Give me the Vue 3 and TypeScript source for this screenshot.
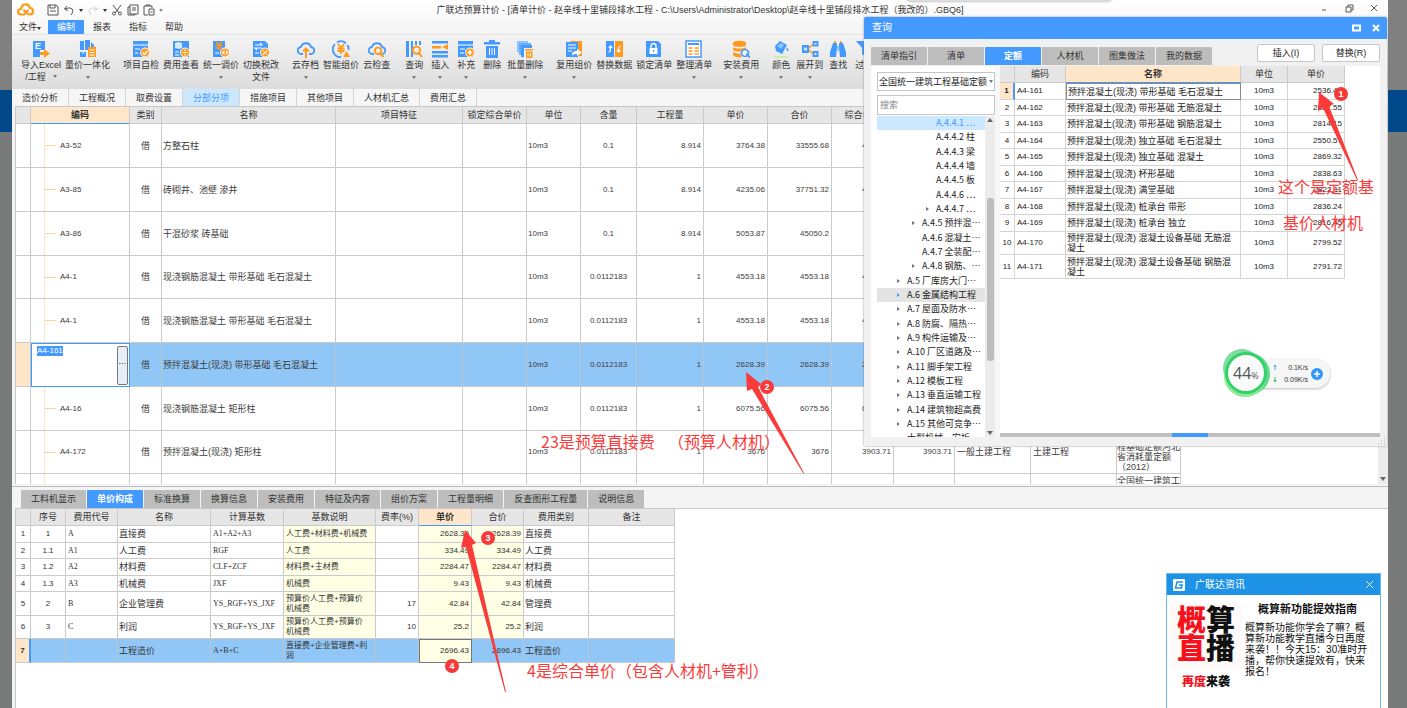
<script setup lang="ts">
import { ref } from 'vue'

interface Shape { d?: string; f?: string; s?: string; w?: number; t?: string; x?: number; y?: number; z?: number }
interface Tool { label: string; second?: string; caret?: boolean; icon: Shape[] }
interface Column { title: string; width: number; align: 'l' | 'c' | 'r'; hot?: boolean; kind?: string }

const B = '#4499ff'
const L = '#8fc4ff'
const O = '#ff9a1f'
const W = '#ffffff'
const doc = 'M1 1h12l3 3v13H1z'
const disc = 'M13 8a4.5 4.5 0 1 0 .01 0z'
const cloud = 'M6 14H4.5a3.5 3.5 0 0 1-.5-7A5.2 5.2 0 0 1 14 7a3.5 3.5 0 0 1-.5 7H12'

const toolGroups: Tool[][] = [
  [
    { label: '导入Excel', second: '/工程', caret: true, icon: [{ d: 'M1 1h12v16H1z', f: B }, { t: 'E', x: 3, y: 9, z: 9, f: W }, { d: 'M8 10h10v7H8z', f: '#efefef' }, { d: 'M8 12h4V9l6 4.5-6 4.5v-3H8z', f: O }] },
    { label: '量价一体化', caret: true, icon: [{ d: 'M1 1h4v9H1zM6 0h5v10H6zM1 12h6v5H1zM12 2l3 3v3h-3z', f: B }, { d: 'M3 13h2', s: W, w: 1 }, { d: 'M9 7h8v10H9z', f: O }, { d: 'M10.5 10h5M10.5 12.5h5M10.5 15h5', s: W, w: 1 }] },
  ],
  [
    { label: '项目自检', icon: [{ d: 'M1 1h15v16H1z', f: B }, { d: 'M1 5h15M3 9h5M3 13h3', s: W, w: 1 }, { d: disc, f: O, s: W, w: 1 }, { d: 'M10.5 12.5l2 2 3-3.5', s: W, w: 1.5 }] },
    { label: '费用查看', icon: [{ d: 'M1 1h16v16H1z', f: B }, { d: 'M3 3l3-1 4 1v5l-3 1-4-1z', f: '#d7eaff' }, { d: 'M3 12h4M3 15h4', s: W, w: 1 }, { d: disc, f: O, s: W, w: 1 }, { d: 'M10.5 12.5h5M13 9.5v1.5M13 14v1.5', s: W, w: 1.2 }] },
    { label: '统一调价', caret: true, icon: [{ d: 'M1 1h12v16H1z', f: B }, { d: 'M4 2l3 3 3-3M3.5 5.5h7M3.5 8h7M7 5v5', s: O, w: 1.4 }, { d: 'M3 13h4', s: W, w: 1 }, { d: disc, f: O, s: W, w: 1 }, { d: 'M12.5 10v5l-2.5-2.5zM14 10v5l2.5-2.5z', f: W }] },
    { label: '切换税改', second: '文件', icon: [{ d: doc, f: B }, { d: 'M3 5h7l-2-2M10 8H3l2 2M3 13h4', s: W, w: 1.2 }, { d: disc, f: O, s: W, w: 1 }, { d: 'M15 10.5l-4 4M11.2 10.5v1M14.8 13.5v1', s: W, w: 1.3 }] },
  ],
  [
    { label: '云存档', caret: true, icon: [{ d: cloud, s: B, w: 1.8 }, { d: 'M9 7l4 4.5h-3V18H8v-6.5H5z', f: O }] },
    { label: '智能组价', icon: [{ d: 'M9 17A7.7 7.7 0 0 1 3 4M5 2.5A7.7 7.7 0 0 1 14 3.2M15.5 5a7.7 7.7 0 0 1 1 5', s: B, w: 1.8 }, { d: 'M6 4l3 4 3-4M5.5 8.5h7M5.5 11h7M9 8v6', s: O, w: 1.8 }, { d: 'M14.5 11l3.5 6h-7z', f: O }] },
    { label: '云检查', icon: [{ d: cloud, s: B, w: 1.8 }, { d: 'M10 7.5a3.3 3.3 0 1 0 .01 0zM12.5 13.5l3 3.5', s: O, w: 2 }] },
  ],
  [
    { label: '查询', caret: true, icon: [{ d: 'M1 1h3v16H1zM6 1h2v16H6zM10 1h2v4h-2zM14 1h2v4h-2z', f: B }, { d: 'M11.5 6.5a3.6 3.6 0 1 0 .01 0zM14 13l3 4', s: O, w: 2 }] },
    { label: '插入', caret: true, icon: [{ d: 'M1 1h16v2.5H1zM1 11h16v2.5H1zM1 15h16v2.5H1z', f: B }, { d: 'M1 6h9v2.5H1zM17 4v6l-6-3z', f: O }] },
    { label: '补充', caret: true, icon: [{ d: 'M1 1h15v16H1z', f: B }, { d: 'M1 5h15M3 9h5M3 13h4', s: W, w: 1 }, { d: disc, f: O, s: W, w: 1 }, { d: 'M10.5 12.5h5M13 10v5', s: W, w: 1.5 }] },
    { label: '删除', icon: [{ d: 'M1 2h5V0h6v2h5v2.5H1zM3 6h12v12H3z', f: B }, { d: 'M6.5 8v7M9 8v7M11.5 8v7', s: W, w: 1 }] },
    { label: '批量删除', caret: true, icon: [{ d: 'M1 1h11v11H1z', f: L }, { d: 'M3 3h12v12H3z', f: '#68aefc' }, { d: 'M5 5h11v12H5z', f: B }, { d: 'M8 8h10v10H8z', f: '#efefef' }, { d: 'M9 9h8v1.5H9zM10 11.5h6.5V18H10z', f: O }, { d: 'M12 13v3.5M14.5 13v3.5', s: W, w: 1 }] },
  ],
  [
    { label: '复用组价', caret: true, icon: [{ d: 'M5 1h12v15H5z', f: O }, { d: 'M1 2h12v15H1z', f: B }, { d: 'M3 5h8M3 8h8M3 11h4', s: W, w: 1.2 }, { d: 'M7 16c0-4 2-5 5-5V9l5 3.5-5 3.5v-2c-2 0-4 0-5 2z', f: W }] },
    { label: '替换数据', icon: [{ d: 'M1 1h8v16H1z', f: B }, { d: 'M10 1h8v16h-8z', f: O }, { d: 'M3.5 12c1.5 0 2-1 2-5M3.8 8l1.7-2 1.7 2M15.5 6c-1.5 0-2 1-2 5M11.8 10l1.7 2 1.7-2', s: W, w: 1.2 }] },
    { label: '锁定清单', icon: [{ d: doc, f: B }, { d: 'M4.5 8h8v6h-8z', f: W }, { d: 'M6 8V6a2.5 2.5 0 0 1 5 0v2', s: W, w: 1.3 }, { d: 'M8.5 10v2', s: B, w: 1.2 }] },
    { label: '整理清单', caret: true, icon: [{ d: 'M1 1h15v16H1z', f: W, s: B, w: 1.5 }, { d: 'M3 4h11', s: B, w: 2 }, { d: 'M3.5 8h4M9.5 8H14M3.5 11h4M9.5 11H14M3.5 14h4M9.5 14H14', s: O, w: 1.6 }] },
  ],
  [
    { label: '安装费用', caret: true, icon: [{ d: 'M1 3c0-3 13-3 13 0v2c0 2.5-13 2.5-13 0z', f: O }, { d: 'M1 7c3 2 10 2 13 0v3c-3 2-10 2-13 0zM1 12c3 2 8 2 10 1v4c-4 1-9 0-10-2z', f: O }, { d: 'M13 9a4.5 4.5 0 1 0 .01 0z', f: W }, { d: 'M13 9.5a3.5 3.5 0 1 0 .01 0M14 13.5l4 4', s: B, w: 1.6 }] },
  ],
  [
    { label: '颜色', caret: true, icon: [{ d: 'M3 6l5-5 7 4-5 9-6-3z', f: B }, { d: 'M5 6l4-3 3 2-3 4z', f: L }, { d: 'M15 8l1 3', s: B, w: 1.4 }, { d: 'M2 16h14v2H2z', f: '#c9f0b4' }] },
    { label: '展开到', caret: true, icon: [{ d: 'M1 5h7v8H1z', f: B }, { d: 'M3 7.5h3v3H3z', f: '#cfe5ff' }, { d: 'M12.5 2h4v3.5h-4zM12.5 12h4v4h-4z', s: B, w: 2 }, { d: 'M8 8l3.5-3.5M8 10l3.5 3.5', s: O, w: 1.4 }] },
    { label: '查找', icon: [{ d: 'M4 3h4v4l-1 10H1V12zM10 3h4l3 9v5h-6l-1-10z', f: B }, { d: 'M5 1h2v2H5zM11 1h2v2h-2z', f: O }, { d: 'M8 6h2v5H8z', f: L }] },
    { label: '过滤', icon: [{ d: 'M1 1h16l-6 7v9l-4-3V8z', f: B }] },
  ],
]

const menus = ['文件', '编制', '报表', '指标', '帮助']
const navTabs = ['造价分析', '工程概况', '取费设置', '分部分项', '措施项目', '其他项目', '人材机汇总', '费用汇总']
const detailTabs = ['工料机显示', '单价构成', '标准换算', '换算信息', '安装费用', '特征及内容', '组价方案', '工程量明细', '反查图形工程量', '说明信息']
const dialogTabs = ['清单指引', '清单', '定额', '人材机', '图集做法', '我的数据']

const mainCols: Column[] = [
  { title: '', width: 15, align: 'c' },
  { title: '编码', width: 99, align: 'l', hot: true, kind: 'code' },
  { title: '类别', width: 32, align: 'c' },
  { title: '名称', width: 174, align: 'l', kind: 'tight' },
  { title: '项目特征', width: 127, align: 'l' },
  { title: '锁定综合单价', width: 64, align: 'c' },
  { title: '单位', width: 54, align: 'l', kind: 'num tight' },
  { title: '含量', width: 56, align: 'c', kind: 'num' },
  { title: '工程量', width: 67, align: 'r', kind: 'num' },
  { title: '单价', width: 64, align: 'r', kind: 'num' },
  { title: '合价', width: 64, align: 'r', kind: 'num' },
  { title: '综合单价', width: 62, align: 'r', kind: 'num' },
  { title: '综合合价', width: 61, align: 'r', kind: 'num' },
  { title: '取费专业', width: 76, align: 'l' },
  { title: '施工组织', width: 86, align: 'l' },
  { title: '所属定额库', width: 64, align: 'l' },
]
const lib = '全国统一建筑工\n程基础定额河北\n省消耗量定额\n（2012）'
function mainRow(code: string, name: string, qty: string, work: string, price: string, total: string, comp: string): string[] {
  return ['', code, '借', name, '', '', '10m3', qty, work, price, total, comp, comp, '一般土建工程', '土建工程', lib]
}
const mainRows: string[][] = [
  mainRow('A3-52', '方整石柱', '0.1', '8.914', '3764.38', '33555.68', '4764.38'),
  mainRow('A3-85', '砖砌井、池壁 渗井', '0.1', '8.914', '4235.06', '37751.32', '4235.06'),
  mainRow('A3-86', '干混砂浆 砖基础', '0.1', '8.914', '5053.87', '45050.2', ''),
  mainRow('A4-1', '现浇钢筋混凝土 带形基础 毛石混凝土', '0.0112183', '1', '4553.18', '4553.18', '4553.18'),
  mainRow('A4-1', '现浇钢筋混凝土 带形基础 毛石混凝土', '0.0112183', '1', '4553.18', '4553.18', '4553.18'),
  mainRow('A4-161', '预拌混凝土(现浇) 带形基础 毛石混凝土', '0.0112183', '1', '2628.39', '2628.39', '2696.43'),
  mainRow('A4-16', '现浇钢筋混凝土 矩形柱', '0.0112183', '1', '6075.56', '6075.56', '6075.56'),
  mainRow('A4-172', '预拌混凝土(现浇) 矩形柱', '0.0112183', '1', '3676', '3676', '3903.71'),
  ['', '', '', '', '', '', '', '', '', '', '', '', '', '', '', lib],
]
const selectedMain = 5

const costCols: Column[] = [
  { title: '', width: 15, align: 'c', kind: 'num' },
  { title: '序号', width: 35, align: 'c', kind: 'num' },
  { title: '费用代号', width: 52, align: 'l', kind: 'formula' },
  { title: '名称', width: 93, align: 'l', kind: 'tight' },
  { title: '计算基数', width: 73, align: 'l', kind: 'formula' },
  { title: '基数说明', width: 92, align: 'l', kind: 'note tint' },
  { title: '费率(%)', width: 43, align: 'r', kind: 'num' },
  { title: '单价', width: 53, align: 'r', hot: true, kind: 'num tint price' },
  { title: '合价', width: 52, align: 'r', kind: 'num tint' },
  { title: '费用类别', width: 65, align: 'l', kind: 'tight' },
  { title: '备注', width: 86, align: 'l' },
]
const costRows: string[][] = [
  ['1', '1', 'A', '直接费', 'A1+A2+A3', '人工费+材料费+机械费', '', '2628.39', '2628.39', '直接费', ''],
  ['2', '1.1', 'A1', '人工费', 'RGF', '人工费', '', '334.49', '334.49', '人工费', ''],
  ['3', '1.2', 'A2', '材料费', 'CLF+ZCF', '材料费+主材费', '', '2284.47', '2284.47', '材料费', ''],
  ['4', '1.3', 'A3', '机械费', 'JXF', '机械费', '', '9.43', '9.43', '机械费', ''],
  ['5', '2', 'B', '企业管理费', 'YS_RGF+YS_JXF', '预算价人工费+预算价\n机械费', '17', '42.84', '42.84', '管理费', ''],
  ['6', '3', 'C', '利润', 'YS_RGF+YS_JXF', '预算价人工费+预算价\n机械费', '10', '25.2', '25.2', '利润', ''],
  ['7', '', '', '工程造价', 'A+B+C', '直接费+企业管理费+利\n润', '', '2696.43', '2696.43', '工程造价', ''],
]

const quotaCols: Column[] = [
  { title: '', width: 15, align: 'c', kind: 'num' },
  { title: '编码', width: 51, align: 'l', kind: 'num' },
  { title: '名称', width: 175, align: 'l', hot: true, kind: 'name' },
  { title: '单位', width: 47, align: 'c', kind: 'num' },
  { title: '单价', width: 57, align: 'r', kind: 'num' },
]
const pre = '预拌混凝土(现浇) '
const quotaRows: string[][] = [
  ['1', 'A4-161', pre + '带形基础 毛石混凝土', '10m3', '2536.47'],
  ['2', 'A4-162', pre + '带形基础 无筋混凝土', '10m3', '2827.55'],
  ['3', 'A4-163', pre + '带形基础 钢筋混凝土', '10m3', '2814.15'],
  ['4', 'A4-164', pre + '独立基础 毛石混凝土', '10m3', '2550.57'],
  ['5', 'A4-165', pre + '独立基础 混凝土', '10m3', '2869.32'],
  ['6', 'A4-166', pre + '杯形基础', '10m3', '2838.63'],
  ['7', 'A4-167', pre + '满堂基础', '10m3', '2822.11'],
  ['8', 'A4-168', pre + '桩承台 带形', '10m3', '2836.24'],
  ['9', 'A4-169', pre + '桩承台 独立', '10m3', '2816.45'],
  ['10', 'A4-170', pre + '混凝土设备基础 无筋混\n凝土', '10m3', '2799.52'],
  ['11', 'A4-171', pre + '混凝土设备基础 钢筋混\n凝土', '10m3', '2791.72'],
]

interface Node { text: string; level: number; arrow: boolean }
const tree: Node[] = [
  { text: 'A.4.4.1 ⋯', level: 3, arrow: false },
  { text: 'A.4.4.2 柱', level: 3, arrow: false },
  { text: 'A.4.4.3 梁', level: 3, arrow: false },
  { text: 'A.4.4.4 墙', level: 3, arrow: false },
  { text: 'A.4.4.5 板', level: 3, arrow: false },
  { text: 'A.4.4.6 ⋯', level: 3, arrow: false },
  { text: 'A.4.4.7 ⋯', level: 3, arrow: true },
  { text: 'A.4.5 预拌混⋯', level: 2, arrow: true },
  { text: 'A.4.6 混凝土⋯', level: 2, arrow: false },
  { text: 'A.4.7 全装配⋯', level: 2, arrow: false },
  { text: 'A.4.8 钢筋、⋯', level: 2, arrow: true },
  { text: 'A.5 厂库房大门⋯', level: 1, arrow: true },
  { text: 'A.6 金属结构工程', level: 1, arrow: true },
  { text: 'A.7 屋面及防水⋯', level: 1, arrow: true },
  { text: 'A.8 防腐、隔热⋯', level: 1, arrow: true },
  { text: 'A.9 构件运输及⋯', level: 1, arrow: true },
  { text: 'A.10 厂区道路及⋯', level: 1, arrow: true },
  { text: 'A.11 脚手架工程', level: 1, arrow: true },
  { text: 'A.12 模板工程', level: 1, arrow: true },
  { text: 'A.13 垂直运输工程', level: 1, arrow: true },
  { text: 'A.14 建筑物超高费', level: 1, arrow: true },
  { text: 'A.15 其他可竞争⋯', level: 1, arrow: true },
  { text: '大型机械、安拆⋯', level: 1, arrow: false },
]

const menu = ref('编制')
const nav = ref('分部分项')
const detail = ref('单价构成')
const dialogTab = ref('定额')
const code = ref('A4-161')
const keyword = ref('')
</script>

<template>
  <div class="desktop">
    <main class="window">
      <header class="top">
        <div class="titlebar">
          <svg class="logo" viewBox="0 0 18 14" aria-hidden="true">
            <path d="M7 11.5H4.5C0 11.5 0 6 4 6 5 0 12 0 13 5c4 0 4 6.500 0 6.500-3 0-4-3-6-4" fill="none" stroke="#ff9a1f" stroke-width="2.2" stroke-linecap="round" />
            <path d="M7 11.5l4-4" fill="none" stroke="#ff9a1f" stroke-width="2" stroke-linecap="round" />
          </svg>
          <div class="quick">
            <button aria-label="保存"><svg viewBox="0 0 12 12"><path d="M1 1h8l2 2v8H1zM3 1v3h5V1M3 7h6" /></svg></button>
            <button aria-label="撤销"><svg viewBox="0 0 12 12"><path d="M4 2L1.5 5 5 6.5M2 5c7-3 10 1 6 6" /></svg></button>
            <i class="caret dark"></i>
            <button aria-label="恢复" class="faint"><svg viewBox="0 0 12 12"><path d="M8 2l2.5 3L7 6.5M10 5C3 2 0 6 4 11" /></svg></button>
            <i class="caret dark"></i>
            <button aria-label="剪切"><svg viewBox="0 0 12 12"><path d="M2 1l6 8M10 1L4 9M1.5 9.5a1.5 1.5 0 1 0 3 0 1.5 1.5 0 1 0-3 0M7.5 9.5a1.5 1.5 0 1 0 3 0 1.5 1.5 0 1 0-3 0" /></svg></button>
            <button aria-label="复制"><svg viewBox="0 0 12 12"><path d="M3 1h8v9H3zM3 3H1v8h7v-1M5 4h4M5 6h4" /></svg></button>
            <button aria-label="粘贴"><svg viewBox="0 0 12 12"><path d="M5 11H1V2h8v2M3 2V1h4v1M6 5h5v6H6zM7.5 8h2" /></svg></button>
            <i class="caret more"></i>
          </div>
          <h1>广联达预算计价 - [清单计价 - 赵辛线十里铺段排水工程 - C:\Users\Administrator\Desktop\赵辛线十里铺段排水工程（我改的）.GBQ6]</h1>
          <div class="controls">
            <button aria-label="最小化"><svg viewBox="0 0 10 10"><path d="M3 7h4" /></svg></button>
            <button aria-label="还原"><svg viewBox="0 0 10 10"><path d="M2 4h5v5H2zM4 4V2h5v5H7" /></svg></button>
            <button aria-label="关闭"><svg viewBox="0 0 10 10"><path d="M2 2l6 6M8 2L2 8" /></svg></button>
          </div>
        </div>
        <nav class="menubar">
          <button v-for="m in menus" :key="m" :class="{ on: m === menu }" @click="menu = m">
            {{ m }}<i v-if="m === '文件'" class="caret dark"></i>
          </button>
        </nav>
        <div class="ribbon">
          <div v-for="(group, g) in toolGroups" :key="g" class="group">
            <button v-for="tool in group" :key="tool.label">
              <svg viewBox="0 0 18 18" aria-hidden="true">
                <template v-for="(p, i) in tool.icon" :key="i">
                  <text v-if="p.t" :x="p.x" :y="p.y" :font-size="p.z" :fill="p.f" font-weight="bold">{{ p.t }}</text>
                  <path v-else :d="p.d" :fill="p.f || 'none'" :stroke="p.s || 'none'" :stroke-width="p.w || 0" />
                </template>
              </svg>
              <span>{{ tool.label }}</span>
              <span class="second">{{ tool.second }}<i v-if="tool.caret" class="caret" :class="{ after: tool.second }"></i></span>
            </button>
          </div>
        </div>
      </header>

      <nav class="navtabs">
        <button v-for="t in navTabs" :key="t" :class="{ on: t === nav }" @click="nav = t">{{ t }}</button>
      </nav>

      <section class="mainpane">
        <div class="gridwrap">
          <table class="grid main">
            <colgroup><col v-for="(c, i) in mainCols" :key="i" :style="{ width: c.width + 'px' }" /></colgroup>
            <thead>
              <tr><th v-for="(c, i) in mainCols" :key="i" :class="{ hot: c.hot }">{{ c.title }}</th></tr>
            </thead>
            <tbody>
              <tr v-for="(row, r) in mainRows" :key="r" :class="{ sel: r === selectedMain, blank: !row[1] }">
                <td v-for="(cell, i) in row" :key="i" :class="[mainCols[i].align, mainCols[i].kind]">
                  <div v-if="r === selectedMain && i === 1" class="editor">
                    <input v-model="code" aria-label="编码" />
                    <button aria-label="选择定额">⋯</button>
                  </div>
                  <template v-else>{{ cell }}</template>
                </td>
              </tr>
            </tbody>
          </table>
        </div>
        <div class="vbar"><i class="down"></i></div>
      </section>

      <section class="detailpane">
        <nav class="graytabs">
          <button v-for="t in detailTabs" :key="t" :class="{ on: t === detail }" @click="detail = t">{{ t }}</button>
        </nav>
        <div class="costwrap">
          <table class="grid cost">
            <colgroup><col v-for="(c, i) in costCols" :key="i" :style="{ width: c.width + 'px' }" /></colgroup>
            <thead>
              <tr><th v-for="(c, i) in costCols" :key="i" :class="{ hot: c.hot }">{{ c.title }}</th></tr>
            </thead>
            <tbody>
              <tr v-for="(row, r) in costRows" :key="r" :class="{ sel: r === 6, tall: r > 3 }">
                <td v-for="(cell, i) in row" :key="i" :class="[costCols[i].align, costCols[i].kind]">{{ cell }}</td>
              </tr>
            </tbody>
          </table>
        </div>
      </section>
    </main>

    <div class="drawer"></div>

    <section class="dialog" role="dialog" aria-label="查询">
      <header>
        <h2>查询</h2>
        <button aria-label="最大化"><svg viewBox="0 0 10 10"><path d="M1 2.5h7v5H1z" /></svg></button>
        <button aria-label="关闭"><svg viewBox="0 0 10 10"><path d="M2 2l6 6M8 2L2 8" /></svg></button>
      </header>
      <div class="dialogbar">
        <nav class="graytabs">
          <button v-for="t in dialogTabs" :key="t" :class="{ on: t === dialogTab }" @click="dialogTab = t">{{ t }}</button>
        </nav>
        <div class="actions"><button>插入(I)</button><button>替换(R)</button></div>
      </div>
      <div class="panes">
        <aside>
          <div class="picker">
            <select aria-label="定额库"><option>全国统一建筑工程基础定额</option></select>
            <i class="caret"></i>
          </div>
          <input v-model="keyword" type="search" placeholder="搜索" aria-label="搜索" />
          <div class="treebox">
            <ul>
              <li v-for="(n, i) in tree" :key="i" :class="['lv' + n.level, { current: i === 0, hover: i === 12 }]">
                <i :class="{ tri: n.arrow }"></i><span>{{ n.text }}</span>
              </li>
            </ul>
            <div class="treebar"><i class="up"></i><b></b><i class="down"></i></div>
          </div>
        </aside>
        <div class="quota">
          <table class="grid">
            <colgroup><col v-for="(c, i) in quotaCols" :key="i" :style="{ width: c.width + 'px' }" /></colgroup>
            <thead>
              <tr><th v-for="(c, i) in quotaCols" :key="i" :class="{ hot: c.hot }">{{ c.title }}</th></tr>
            </thead>
            <tbody>
              <tr v-for="(row, r) in quotaRows" :key="r" :class="{ first: r === 0, tall: r > 8 }">
                <td v-for="(cell, i) in row" :key="i" :class="[quotaCols[i].align, quotaCols[i].kind]">{{ cell }}</td>
              </tr>
            </tbody>
          </table>
          <div class="splitter"><i></i></div>
        </div>
      </div>
      <svg class="grip" viewBox="0 0 8 8" aria-hidden="true"><path d="M6 1h1M6 4h1M3 4h1M6 7h1M3 7h1M0 7h1" stroke="#aaa" /></svg>
    </section>

    <div class="meter">
      <svg viewBox="0 0 50 50" aria-hidden="true">
        <circle cx="21" cy="20" r="19" fill="#7fdc9f" />
        <circle cx="28" cy="26" r="21" fill="#5fd98a" />
        <circle cx="24" cy="28" r="21" fill="#8beb97" />
        <circle cx="25" cy="25" r="21" fill="#33d169" />
        <circle cx="25" cy="25" r="18" fill="#fbfbfb" />
      </svg>
      <p class="percent">44<small>%</small></p>
      <div class="speeds">
        <p><b class="upload">↑</b><span>0.1K/s</span></p>
        <p><b class="download">↓</b><span>0.09K/s</span></p>
      </div>
      <button aria-label="加速"><svg viewBox="0 0 12 12"><circle cx="6" cy="6" r="6" fill="#3296fa" /><path d="M3 6h6M6 3v6" stroke="#fff" stroke-width="1.5" /></svg></button>
    </div>

    <section class="news">
      <header>
        <svg viewBox="0 0 12 12" aria-hidden="true"><rect width="12" height="12" rx="1" fill="#fff" /><path d="M10 3H4L2.5 9H8.5L9.2 6H6" fill="none" stroke="#1e92e5" stroke-width="1.5" /></svg>
        <h2>广联达资讯</h2>
        <button aria-label="关闭"><svg viewBox="0 0 10 10"><path d="M1 1l8 8M9 1L1 9" /></svg></button>
      </header>
      <div class="newsbody">
        <div class="poster">
          <div class="big"><em>概</em>算<br /><em>直</em>播</div>
          <div class="small"><em>再度</em>来袭</div>
        </div>
        <article>
          <h3>概算新功能提效指南</h3>
          <p>概算新功能你学会了嘛？概<br />算新功能教学直播今日再度<br />来袭！！今天15：30准时开<br />播，帮你快速提效有，快来<br />报名！</p>
        </article>
      </div>
    </section>

    <svg class="arrows" aria-hidden="true">
      <g fill="#fb3a3a">
        <path d="M1319 92L1334 104L1329 106L1358 180L1357 180L1323 108L1318 111z" />
        <path d="M746 372L761 384L758 387L804 473L803 473L752 389L747 391z" />
        <path d="M465 530L476 543L472 545L506 692L505 692L466 547L461 548z" />
      </g>
    </svg>
    <b class="badge b1">1</b>
    <b class="badge b2">2</b>
    <b class="badge b3">3</b>
    <b class="badge b4">4</b>
    <p class="remark r1">这个是定额基</p>
    <p class="remark r5">基价人材机</p>
    <p class="remark r2">23是预算直接费</p>
    <p class="remark r3">（预算人材机）</p>
    <p class="remark r4">4是综合单价（包含人材机+管利）</p>
  </div>
</template>

<style>
body { margin: 0; overflow: hidden; }
</style>

<style scoped>
.desktop {
  position: relative;
  height: 100vh;
  overflow: hidden;
  padding: 0 19px 0 12px;
  background: linear-gradient(#808080 0 90px, #00488a 90px 132px, #777a79 132px);
  font-family: "Liberation Sans", "Noto Sans CJK SC", sans-serif;
  font-size: 9px;
  line-height: 10px;
  color: #333;
}
.desktop, .desktop * { box-sizing: border-box; }
h1, h2, h3, p, ul { margin: 0; padding: 0; font-size: inherit; font-weight: normal; }
button, input, select { margin: 0; padding: 0; border: 0; border-radius: 0; background: none; font: inherit; color: inherit; }
i, em { font-style: normal; }
.window { display: flex; flex-direction: column; height: 100%; background: #f4f4f4; }

.caret { display: inline-block; border: 2px solid transparent; border-top: 3px solid #777; border-bottom: 0; }
.caret.dark { border-top-color: #333; }

.top { flex: none; background: linear-gradient(#ffffff, #f4f4f4 40%, #dcdcdc); }
.titlebar { display: flex; align-items: center; height: 20px; }
.logo { width: 18px; height: 14px; margin-left: 5px; }
.quick { display: flex; align-items: center; gap: 4px; margin-left: 12px; width: 130px; height: 18px; }
.quick button, .quick svg { display: block; width: 12px; height: 12px; }
.quick svg, .controls svg { fill: none; stroke: #555; stroke-width: 1; }
.quick .faint { opacity: 0.25; }
.quick .more { border-top-color: #888; }
h1 { flex: 1; text-align: center; white-space: nowrap; padding-right: 96px; }
.controls { display: flex; gap: 15px; width: 69px; height: 18px; }
.controls button, .controls svg { display: block; width: 10px; height: 14px; }
.menubar { display: flex; height: 15px; border-bottom: 1px solid #e2e2e2; }
.menubar button { width: 36px; height: 14px; text-align: center; white-space: nowrap; }
.menubar .on { background: #4499ff; color: #fff; border-radius: 1px 1px 0 0; }
.ribbon { display: flex; gap: 9px; height: 53px; padding: 5px 0 0 7px; overflow: hidden; }
.group { display: flex; flex: none; align-items: flex-start; }
.group:nth-child(n + 6) { margin-left: -2px; }
.group button { display: flex; flex-direction: column; align-items: center; min-width: 26px; padding: 0 2px; white-space: nowrap; }
.group svg { width: 18px; height: 18px; margin-bottom: 2px; }
.group span { line-height: 11px; }
.group .second { display: flex; align-items: center; min-height: 12px; }
.caret.after { margin: 0 0 2px 7px; }

.navtabs { display: flex; flex: none; height: 18px; background: #f6f6f6; border-top: 1px solid #ddd; }
.navtabs button { padding: 0 10px; border-right: 1px solid #d4d4d4; }
.navtabs .on { background: #cce8ff; color: #4499ff; }

.mainpane { display: flex; flex: 1; min-height: 0; margin-left: 3px; border-bottom: 2px solid #f4f4f4; }
.gridwrap { flex: 1; min-width: 0; overflow: hidden; background: #fff; border-left: 1px solid #c8c8c8; border-top: 1px solid #c8c8c8; }
.vbar { position: relative; width: 10px; background: #ececec; }
.down, .up { display: block; border: 3px solid transparent; border-top: 4px solid #666; border-bottom: 0; }
.up { border-top: 0; border-bottom: 4px solid #666; }
.vbar .down { position: absolute; left: 2px; bottom: 3px; }

.grid { table-layout: fixed; width: 0; border-collapse: separate; border-spacing: 0; }
.grid th, .grid td { padding: 0 2px; border-right: 1px solid #cacaca; border-bottom: 1px solid #cacaca; white-space: pre; overflow: hidden; vertical-align: middle; line-height: 10px; }
.grid th { height: 17px; padding: 0; background: #e6e6e6; font-weight: normal; text-align: center; color: #333; }
.grid th.hot { background: #ffe6c8; border-bottom: 1px solid #4499ff; font-weight: bold; }
.l { text-align: left; }
.c { text-align: center; }
.r { text-align: right; }
.grid .num { font-size: 8px; }
.grid .formula { font-family: "Liberation Serif", serif; font-size: 8px; }
.grid .note { font-size: 8px; }
.grid td.tight { padding-left: 1px; }

.main td { height: 44px; color: #3c3c3c; }
.main tr:nth-child(4n) td { height: 43px; }
.main td:last-child { padding: 0; }
.main td.code {
  padding-left: 29px;
  font-size: 8px;
  background: linear-gradient(#ffe3c2, #ffe3c2) 13px 0 / 1px 100% no-repeat, linear-gradient(#fbd3a0, #fbd3a0) 13px 50% / 12px 1px no-repeat;
}
.main .blank td.code { background: linear-gradient(#ffe3c2, #ffe3c2) 13px 0 / 1px 100% no-repeat; }
.sel td { background: #91c7f7; border-right-color: #b9c4cf; }
.sel td:first-child { background: #ffe6c8; }
.main .sel td.code { padding: 0; background: #fff; border: 1px solid #4499ff; }
.editor { display: flex; justify-content: space-between; height: 41px; padding: 1px 1px 1px 5px; }
.editor input { width: 26px; height: 10px; background: #4499ff; color: #fff; font-size: 8px; outline: 0; }
.editor button { width: 11px; background: #e9edf5; border: 1px solid #777; border-radius: 2px; overflow: hidden; }

.detailpane { flex: 0 0 222px; display: flex; flex-direction: column; border-top: 1px solid #bdbdbd; padding-left: 3px; }
.graytabs { display: flex; gap: 1px; }
.graytabs button { height: 18px; padding: 0 10px; background: #bdbdbd; border-radius: 1px 1px 0 0; color: #333; white-space: nowrap; }
.graytabs .on { background: #4499ff; color: #fff; font-weight: bold; }
.detailpane .graytabs { padding: 3px 0 0 6px; }
.costwrap { flex: 1; background: #fff; border-top: 1px solid #c8c8c8; border-left: 1px solid #c8c8c8; overflow: hidden; }
.cost td { height: 16px; }
.cost tr:nth-child(odd) td { height: 17px; }
.cost tr.tall td { height: 24px; }
.cost tr:nth-child(6) td { height: 23px; }
.cost td.tint { background: #ffffe6; }
.cost .sel td.tint { background: #91c7f7; }
.cost .sel td.price { background: #ffffe6; border: 1px solid #777; }
.cost .sel td:first-child { font-weight: bold; border-right: 2px solid #4499ff; }

.drawer { position: absolute; right: 296px; top: -4px; width: 204px; height: 5px; background: #ddd; border-radius: 3px; box-shadow: 0 0 3px #888; }

.dialog { position: absolute; top: 17px; right: 20px; width: 523px; height: 429px; display: flex; flex-direction: column; padding-bottom: 9px; background: #f1f1f1; border-radius: 2px 2px 0 0; box-shadow: 0 0 2px #777; color: #222; }
.dialog > header { display: flex; align-items: center; gap: 9px; flex: none; height: 22px; padding: 0 6px 0 8px; background: #4499ff; border-radius: 2px 2px 0 0; color: #fff; }
.dialog h2 { flex: 1; font-size: 10px; }
.dialog header svg { display: block; width: 10px; height: 10px; fill: none; stroke: #fff; stroke-width: 2; }
.dialogbar { display: flex; justify-content: space-between; flex: none; height: 26px; padding: 5px 7px 0; }
.dialogbar .graytabs { padding-top: 3px; }
.dialogbar .graytabs button { width: 56px; padding: 0; }
.actions { display: flex; gap: 7px; }
.actions button { width: 58px; height: 18px; background: #fff; border: 1px solid #c6c6c6; border-radius: 2px; }
.panes { display: flex; flex: 1; min-height: 0; margin: 1px 7px 0; gap: 5px; background: #f7f7f7; }
aside { display: flex; flex-direction: column; width: 124px; padding: 6px 0 0 6px; background: #fff; }
.picker { position: relative; flex: none; height: 19px; margin-bottom: 4px; }
.picker select { width: 100%; height: 19px; padding-left: 1px; border: 1px solid #c4c4c4; appearance: none; background: #fff; }
.picker .caret { position: absolute; right: 2px; top: 8px; }
aside input { flex: none; height: 20px; margin-bottom: 1px; padding-left: 2px; border: 1px solid #c4c4c4; appearance: none; outline: 0; }
aside input::placeholder { color: #888; opacity: 1; }
.treebox { display: flex; flex: 1; min-height: 0; }
ul { flex: 1; min-width: 0; overflow: hidden; list-style: none; font-family: "Noto Sans CJK SC", sans-serif; }
li { display: flex; align-items: center; height: 14px; white-space: nowrap; }
li:nth-child(3n) { height: 15px; }
li i { width: 10px; }
li .tri::before { content: ""; display: block; width: 0; border: 2px solid transparent; border-left: 3px solid #777; border-right: 0; }
.lv1 { padding-left: 20px; }
.lv2 { padding-left: 35px; }
.lv3 { padding-left: 49px; }
.current { background: #cce8ff; color: #4499ff; }
.hover { background: #e4e4e4; }
.hover .tri::before { border-left-color: #4499ff; }
.treebar { display: flex; flex-direction: column; align-items: center; width: 10px; padding: 2px 0; background: #ececec; }
.treebar b { width: 7px; height: 163px; margin-top: 76px; background: #bdbdbd; border-radius: 3px; }
.treebar .down { margin-top: auto; }
.quota { display: flex; flex: 1; flex-direction: column; justify-content: space-between; min-width: 0; background: #fff; }
.quota .grid td { height: 16px; border-color: #d4d4d4; }
.quota .grid tr:nth-child(odd) td { height: 17px; }
.quota .grid tr.tall td { height: 24px; }
.quota .grid tr:nth-child(10) td { height: 23px; }
.quota .first td:first-child { background: #ffe6c8; border-right: 2px solid #4499ff; font-weight: bold; }
.quota .grid .first td.name { border: 1px solid #888; }
.quota .name { padding-left: 1px; }
.splitter { height: 4px; background: #bfbfbf; }
.splitter i { display: block; width: 36px; height: 4px; margin: 0 auto; background: #4499ff; }
.grip { position: absolute; right: 1px; bottom: 1px; width: 8px; height: 8px; }

.meter { position: absolute; right: 77px; top: 359px; display: flex; align-items: center; width: 84px; height: 29px; padding-left: 26px; background: #f6f6f6; border-radius: 15px; box-shadow: 0 1px 3px #bbb; color: #333; }
.meter > svg { position: absolute; left: -25px; top: -11px; width: 50px; height: 50px; }
.percent { position: absolute; left: -13px; top: 5px; width: 30px; line-height: 18px; font-family: "Open Sans", "Noto Sans", sans-serif; font-size: 16px; color: #555; white-space: nowrap; }
.percent small { font-size: 9px; }
.speeds { position: relative; width: 36px; font-size: 7px; line-height: 12px; }
.speeds p { display: flex; justify-content: space-between; }
.speeds b { font-family: "DejaVu Sans", sans-serif; }
.upload { color: #3296fa; }
.download { color: #20b455; }
.meter button, .meter button svg { display: block; width: 12px; height: 12px; }
.meter button { margin-left: 3px; }

.news { position: absolute; right: 26px; bottom: 0; width: 215px; height: 135px; background: #fff; border: 1px solid #6bb9f0; border-bottom: 0; color: #111; }
.news header { display: flex; align-items: center; height: 21px; padding: 0 6px; gap: 10px; background: #1e92e5; color: #fff; }
.news header > svg { width: 12px; height: 12px; }
.news h2 { flex: 1; font-size: 10px; }
.news header button svg { display: block; width: 9px; height: 9px; fill: none; stroke: #fff; }
.newsbody { display: flex; gap: 3px; padding: 8px 0 0 3px; }
.poster { width: 72px; font-weight: 900; text-align: center; }
.poster em { color: #f5121d; }
.big { height: 66px; padding-top: 4px; background: #fdfaf9; font-size: 29px; line-height: 28px; }
.small { padding-top: 6px; font-size: 12px; line-height: 14px; }
article h3 { padding: 0 0 7px 13px; font-size: 11px; line-height: 12px; font-weight: bold; }
article p { font-size: 10px; line-height: 11px; white-space: nowrap; }

.arrows { position: absolute; left: 0; top: 0; width: 100%; height: 100%; pointer-events: none; }
.badge { position: absolute; width: 14px; height: 14px; border-radius: 7px; background: #f73939; color: #fff; font-size: 9px; line-height: 14px; text-align: center; }
.b1 { left: 1334px; top: 87px; }
.b2 { left: 760px; top: 380px; }
.b3 { left: 481px; top: 531px; }
.b4 { left: 445px; top: 659px; }
.remark { position: absolute; color: #fb3a3a; font-family: "Noto Sans CJK SC", sans-serif; font-size: 16px; line-height: 20px; white-space: nowrap; }
.r1 { left: 1278px; top: 176px; }
.r5 { left: 1283px; top: 212px; }
.r2 { left: 541px; top: 431px; }
.r3 { left: 668px; top: 431px; }
.r4 { left: 527px; top: 660px; }
</style>
